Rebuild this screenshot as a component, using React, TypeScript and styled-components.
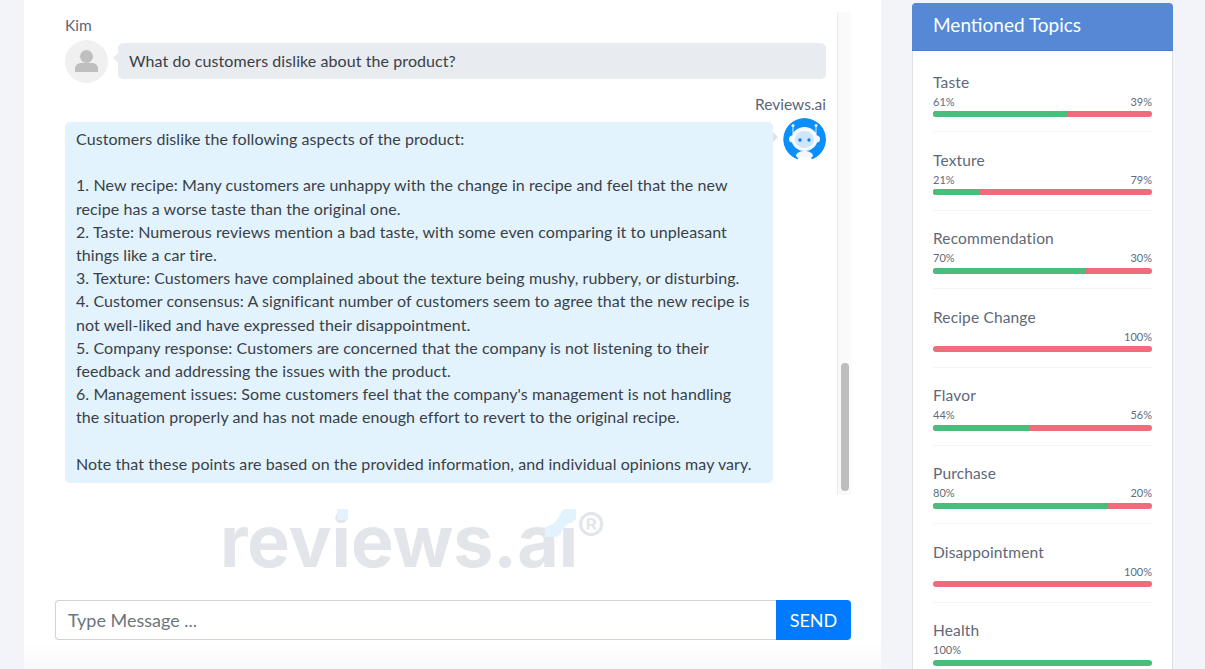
import React from 'react';
import styled, { createGlobalStyle } from 'styled-components';

const GlobalStyle = createGlobalStyle`
  html, body {
    margin: 0;
    padding: 0;
    background: #f3f4f9;
    font-family: 'Lato', 'Liberation Sans', sans-serif;
  }
`;

const Page = styled.div`
  width: 1205px;
  height: 669px;
  overflow: hidden;
  display: flex;
  align-items: flex-start;
  padding-left: 24px;
  box-sizing: border-box;
`;

const ChatCard = styled.main`
  width: 857px;
  height: 669px;
  flex: none;
  background: linear-gradient(to bottom, #fff 96%, #f9f9fc);
  padding: 12px 30px 0 31px;
  box-sizing: border-box;
`;

const ChatScroll = styled.div`
  position: relative;
  height: 483px;
  padding: 3px 25px 0 10px;
  box-sizing: border-box;
`;

const ScrollTrack = styled.div`
  position: absolute;
  top: 0;
  right: 0;
  bottom: 0;
  width: 13px;
  background: #fafafa;
  border-left: 1px solid #ececec;
`;

const ScrollThumb = styled.div`
  position: absolute;
  top: 351px;
  bottom: 4px;
  left: 3px;
  width: 8px;
  border-radius: 4px;
  background: #bdbdbd;
`;

const SenderName = styled.div<{ $right?: boolean }>`
  color: #5b6478;
  font-size: 15.5px;
  line-height: 20px;
  height: 20px;
  text-align: ${(p) => (p.$right ? 'right' : 'left')};
  margin-top: ${(p) => (p.$right ? '11px' : '0')};
`;

const Row = styled.div<{ $top: number }>`
  display: flex;
  align-items: flex-start;
  gap: 10px;
  margin-top: ${(p) => p.$top}px;
`;

const Avatar = styled.div`
  width: 43px;
  height: 43px;
  flex: none;
  border-radius: 50%;
  overflow: hidden;
  svg {
    display: block;
  }
`;

const Bubble = styled.div<{ $bot?: boolean }>`
  position: relative;
  flex: 1;
  border-radius: 5px;
  color: #3a3f47;
  font-size: 16px;
  line-height: ${(p) => (p.$bot ? '23.2px' : '23px')};
  box-sizing: border-box;
  background: ${(p) => (p.$bot ? '#e2f3fe' : '#e8ebef')};
  padding: ${(p) => (p.$bot ? '5px 11px 0' : '6px 11px')};
  height: ${(p) => (p.$bot ? '361px' : '36px')};
  margin-top: ${(p) => (p.$bot ? '4px' : '3px')};
  white-space: pre-wrap;
  letter-spacing: 0.08px;
  &::after {
    content: '';
    position: absolute;
    top: 10px;
    ${(p) => (p.$bot ? 'right: -5px;' : 'left: -5px;')}
    border-top: 5px solid transparent;
    border-bottom: 5px solid transparent;
    ${(p) => (p.$bot ? 'border-left: 5px solid #e1e3e6;' : 'border-right: 5px solid #e8ebef;')}
  }
`;

const Watermark = styled.div`
  position: relative;
  width: 400px;
  height: 105px;
  margin-left: 164px;
  padding-left: 1px;
  box-sizing: border-box;
  color: #e2e5e9;
  font-family: 'Inter', 'Liberation Sans', sans-serif;
  font-weight: 700;
  font-size: 71.5px;
  line-height: 92px;
  white-space: nowrap;
`;

const WatermarkMark = styled.span`
  position: absolute;
  top: 12px;
  left: 358px;
  font-size: 42px;
  line-height: 42px;
  font-weight: 400;
`;

const WatermarkAccent = styled.svg`
  position: absolute;
  left: 0;
  top: 0;
`;

const InputRow = styled.form`
  display: flex;
  height: 40px;
  margin: 0;
`;

const MessageInput = styled.div`
  flex: 1;
  border: 1px solid #ced4da;
  border-right: 0;
  border-radius: 4px 0 0 4px;
  color: #6c757d;
  font-size: 18px;
  line-height: 38px;
  padding-left: 12px;
`;

const SendButton = styled.div`
  width: 75px;
  background: #007bff;
  color: #fff;
  font-size: 18px;
  line-height: 40px;
  text-align: center;
  border-radius: 0 4px 4px 0;
`;

const Sidebar = styled.aside`
  width: 261px;
  flex: none;
  margin: 3px 0 0 31px;
  background: #fff;
  border: 1px solid #dfe3e8;
  border-radius: 4px;
  box-sizing: border-box;
  height: 700px;
`;

const SidebarHeader = styled.h2`
  margin: -1px -1px 0;
  height: 48px;
  background: #5589d6;
  border-bottom: 1px solid #4a7cc6;
  border-radius: 4px 4px 0 0;
  color: #fff;
  font-size: 19px;
  font-weight: 400;
  line-height: 44px;
  padding-left: 21px;
  box-sizing: border-box;
`;

const TopicList = styled.div`
  padding: 3px 20px 0;
`;

const Topic = styled.div`
  height: 78.4px;
  box-sizing: border-box;
  padding-top: 17.5px;
  border-bottom: 1px solid #f3f4f6;
  &:last-child {
    border-bottom: 0;
  }
`;

const TopicName = styled.div`
  color: #5f6878;
  font-size: 15.5px;
  letter-spacing: 0.15px;
  line-height: 20px;
`;

const TopicValues = styled.div`
  display: flex;
  justify-content: space-between;
  color: #626b7a;
  font-size: 11px;
  line-height: 14px;
  height: 14px;
  margin-top: 3px;
`;

const Bar = styled.div`
  display: flex;
  height: 6px;
  margin-top: 2.5px;
  border-radius: 3px;
  overflow: hidden;
  background: #f06b7c;
`;

const BarFill = styled.div`
  height: 100%;
  background: #48bd7c;
`;

const UserIcon = () => (
  <svg width="43" height="43" viewBox="0 0 43 43">
    <rect width="43" height="43" fill="#f0f0f0" />
    <circle cx="21.5" cy="16.500" r="6.500" fill="#bfbfbf" />
    <path d="M10 32v-3.500c0-3.500 3-5.500 7-5.500h9c4 0 7 2 7 5.500V32z" fill="#bfbfbf" />
  </svg>
);

const BotIcon = () => (
  <svg width="43" height="43" viewBox="0 0 43 43">
    <path d="M14.500 41.500A21.500 21.500 0 1 1 29 41.500l-1.800-3.500c-3-2-8-2-11 0z" fill="#0b8ffa" />
    <path d="M13 38c0-3 4-5 8.500-5s8.500 2 8.500 5l-2 2c-3-2-10-2-13 0z" fill="#f4f8fd" />
    <path d="M10 8v8M33 8v8" stroke="#dcecfb" strokeWidth="1" />
    <circle cx="10" cy="7.500" r="1.500" fill="#e8f3fd" />
    <circle cx="33" cy="7.500" r="1.500" fill="#e8f3fd" />
    <circle cx="9.500" cy="21" r="3.500" fill="#f4f8fd" />
    <circle cx="33.500" cy="21" r="3.500" fill="#f4f8fd" />
    <ellipse cx="21.500" cy="21" rx="13" ry="12" fill="#f7fafe" />
    <ellipse cx="21.500" cy="21.500" rx="9.500" ry="8.500" fill="#cfe5fa" />
    <circle cx="17" cy="22" r="1.700" fill="#0b7ff0" />
    <circle cx="26" cy="22" r="1.700" fill="#0b7ff0" />
  </svg>
);

const answer = `Customers dislike the following aspects of the product:

1. New recipe: Many customers are unhappy with the change in recipe and feel that the new
recipe has a worse taste than the original one.
2. Taste: Numerous reviews mention a bad taste, with some even comparing it to unpleasant
things like a car tire.
3. Texture: Customers have complained about the texture being mushy, rubbery, or disturbing.
4. Customer consensus: A significant number of customers seem to agree that the new recipe is
not well-liked and have expressed their disappointment.
5. Company response: Customers are concerned that the company is not listening to their
feedback and addressing the issues with the product.
6. Management issues: Some customers feel that the company's management is not handling
the situation properly and has not made enough effort to revert to the original recipe.

Note that these points are based on the provided information, and individual opinions may vary.`;

const topics = [
  { name: 'Taste', good: 61 },
  { name: 'Texture', good: 21 },
  { name: 'Recommendation', good: 70 },
  { name: 'Recipe Change', good: 0 },
  { name: 'Flavor', good: 44 },
  { name: 'Purchase', good: 80 },
  { name: 'Disappointment', good: 0 },
  { name: 'Health', good: 100 },
];

export default function App() {
  return (
    <Page>
      <GlobalStyle />
      <ChatCard>
        <ChatScroll>
          <ScrollTrack>
            <ScrollThumb />
          </ScrollTrack>
          <SenderName>Kim</SenderName>
          <Row $top={5}>
            <Avatar>
              <UserIcon />
            </Avatar>
            <Bubble>What do customers dislike about the product?</Bubble>
          </Row>
          <SenderName $right>Reviews.ai</SenderName>
          <Row $top={4}>
            <Bubble $bot>{answer}</Bubble>
            <Avatar>
              <BotIcon />
            </Avatar>
          </Row>
        </ChatScroll>
        <Watermark>
          reviews.ai
          <WatermarkAccent width="400" height="105" viewBox="0 0 400 105">
            <rect x="118" y="14" width="11" height="11" rx="1" fill="#e2f3fe" />
            <path d="M326 32c8-1 11-6 15-12 1-3 3-6 6-6h10v11c-7 1-10 6-14 11-2 4-4 6-8 6h-9z" fill="#e2f3fe" />
          </WatermarkAccent>
          <WatermarkMark>®</WatermarkMark>
        </Watermark>
        <InputRow>
          <MessageInput>Type Message ...</MessageInput>
          <SendButton>SEND</SendButton>
        </InputRow>
      </ChatCard>
      <Sidebar>
        <SidebarHeader>Mentioned Topics</SidebarHeader>
        <TopicList>
          {topics.map((t) => (
            <Topic key={t.name}>
              <TopicName>{t.name}</TopicName>
              <TopicValues>
                <span>{t.good > 0 ? `${t.good}%` : ''}</span>
                <span>{t.good < 100 ? `${100 - t.good}%` : ''}</span>
              </TopicValues>
              <Bar>
                <BarFill style={{ width: `${t.good}%` }} />
              </Bar>
            </Topic>
          ))}
        </TopicList>
      </Sidebar>
    </Page>
  );
}
